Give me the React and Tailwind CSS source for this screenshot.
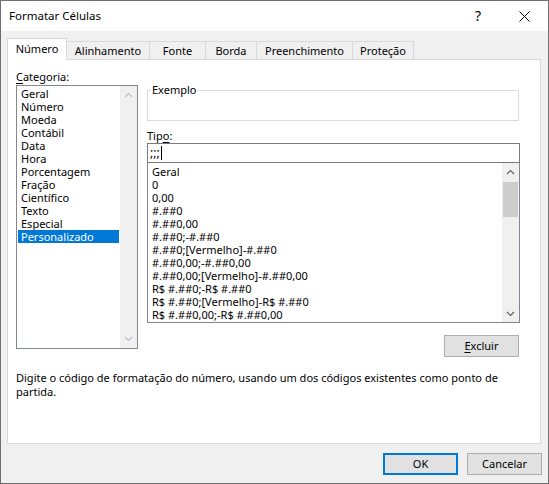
import React from "react";

const font = { fontFamily: '"Noto Sans", "Open Sans", sans-serif' };

function Up({ color }) {
  return (
    <svg width="9" height="6" viewBox="0 0 9 6">
      <polyline points="1,5 4.5,1.5 8,5" fill="none" stroke={color} strokeWidth="1.2" />
    </svg>
  );
}
function Down({ color }) {
  return (
    <svg width="9" height="6" viewBox="0 0 9 6">
      <polyline points="1,1 4.5,4.5 8,1" fill="none" stroke={color} strokeWidth="1.2" />
    </svg>
  );
}

const categories = [
  "Geral",
  "Número",
  "Moeda",
  "Contábil",
  "Data",
  "Hora",
  "Porcentagem",
  "Fração",
  "Científico",
  "Texto",
  "Especial",
  "Personalizado",
];

const types = [
  "Geral",
  "0",
  "0,00",
  "#.##0",
  "#.##0,00",
  "#.##0;-#.##0",
  "#.##0;[Vermelho]-#.##0",
  "#.##0,00;-#.##0,00",
  "#.##0,00;[Vermelho]-#.##0,00",
  "R$ #.##0;-R$ #.##0",
  "R$ #.##0;[Vermelho]-R$ #.##0",
  "R$ #.##0,00;-R$ #.##0,00",
];

const tabs = [
  ["Alinhamento", "w-[83px]"],
  ["Fonte", "w-[56px]"],
  ["Borda", "w-[51px]"],
  ["Preenchimento", "w-[96px]"],
  ["Proteção", "w-[61px]"],
];

export default function App() {
  return (
    <div
      className="w-[549px] h-[484px] border border-[#6f6f6f] bg-[#f0f0f0] flex flex-col text-[11px] text-black overflow-hidden"
      style={font}
    >
      {/* Title bar */}
      <div className="h-[30px] bg-white flex items-center shrink-0">
        <span className="ml-[8px] leading-[16px] text-[11.5px]">Formatar Células</span>
        <span className="ml-auto mr-[38px] text-[14px] leading-[16px]">?</span>
        <svg className="mr-[18px]" width="11" height="11" viewBox="0 0 11 11">
          <path d="M0.5 0.5 L10.5 10.5 M10.5 0.5 L0.5 10.5" stroke="#000" strokeWidth="1" />
        </svg>
      </div>

      {/* Tabs */}
      <div className="flex items-end h-[21px] mt-[7px] pl-[6px] shrink-0">
        <div className="relative z-10 w-[60px] h-[22px] -mb-px bg-white border border-b-0 border-[#d9d9d9] flex items-center justify-center leading-[16px] pb-[1px]">
          Número
        </div>
        {tabs.map(([t, w]) => (
          <div
            key={t}
            className={`${w} h-[18px] bg-[#f0f0f0] border-t border-r border-[#d9d9d9] flex items-center justify-center leading-[16px]`}
          >
            {t}
          </div>
        ))}
      </div>

      {/* Panel */}
      <div className="ml-[6px] w-[534px] h-[385px] bg-white border border-[#d9d9d9] shrink-0 flex flex-col pl-[8px] pt-[8px]">
        <div className="flex gap-[9px]">
          {/* Left column */}
          <div className="w-[122px] flex flex-col">
            <div className="leading-[17px]">
              <span className="underline underline-offset-2">C</span>ategoria:
            </div>
            <div className="h-[264px] border border-[#828790] flex">
              <div className="flex-1 pt-[1px] flex flex-col">
                {categories.map((c) => (
                  <div
                    key={c}
                    className={`leading-[13px] h-[13px] pl-[3px] ml-[1px] mr-[1px] whitespace-nowrap ${
                      c === "Personalizado" ? "bg-[#0078d7] text-white" : ""
                    }`}
                  >
                    {c}
                  </div>
                ))}
              </div>
              <div className="w-[17px] bg-[#f0f0f0] flex flex-col items-center justify-between py-[6px]">
                <Up color="#c0c0c0" />
                <Down color="#c0c0c0" />
              </div>
            </div>
          </div>

          {/* Right column */}
          <div className="w-[373px] flex flex-col">
            <fieldset className="w-[372px] h-[38px] mt-[15px] border border-[#dcdcdc] pl-[3px]">
              <legend className="px-[1px] leading-[14px]">Exemplo</legend>
            </fieldset>
            <div className="leading-[15px] mt-[7px]">
              Tip<span className="underline underline-offset-2">o</span>:
            </div>
            <div className="h-[20px] border border-[#7a7a7a] flex items-center pl-[2px]">
              <span className="leading-[14px] text-[12px]">;;;</span>
              <span className="w-px h-[14px] bg-black ml-[1px]"></span>
            </div>
            <div className="h-[160px] border border-[#828790] border-t-0 flex">
              <div className="flex-1 pt-[2px] pl-[4px] flex flex-col">
                {types.map((t, i) => (
                  <div key={i} className="leading-[13px] h-[13px] whitespace-nowrap">
                    {t}
                  </div>
                ))}
              </div>
              <div className="w-[17px] bg-[#f0f0f0] flex flex-col items-center pt-[6px] pb-[5px]">
                <Up color="#606060" />
                <div className="w-[15px] h-[35px] bg-[#cdcdcd] mt-[7px]"></div>
                <div className="flex-1"></div>
                <Down color="#606060" />
              </div>
            </div>
            <div className="flex justify-end mt-[12px]">
              <button className="w-[75px] h-[22px] mr-[1px] bg-[#e1e1e1] border border-[#adadad] leading-[16px]">
                <span className="underline underline-offset-2">E</span>xcluir
              </button>
            </div>
          </div>
        </div>
        <div className="mt-[14px] leading-[14px]">
          <div className="whitespace-nowrap">
            Digite o código de formatação do número, usando um dos códigos existentes como ponto de
          </div>
          <div>partida.</div>
        </div>
      </div>

      {/* Buttons */}
      <div className="flex justify-end gap-[9px] mt-[9px] pr-[6px]">
        <button className="w-[75px] h-[22px] bg-[#e1e1e1] border-2 border-[#0078d7] leading-[16px]">
          OK
        </button>
        <button className="w-[75px] h-[22px] bg-[#e1e1e1] border border-[#adadad] leading-[16px]">
          Cancelar
        </button>
      </div>
    </div>
  );
}
